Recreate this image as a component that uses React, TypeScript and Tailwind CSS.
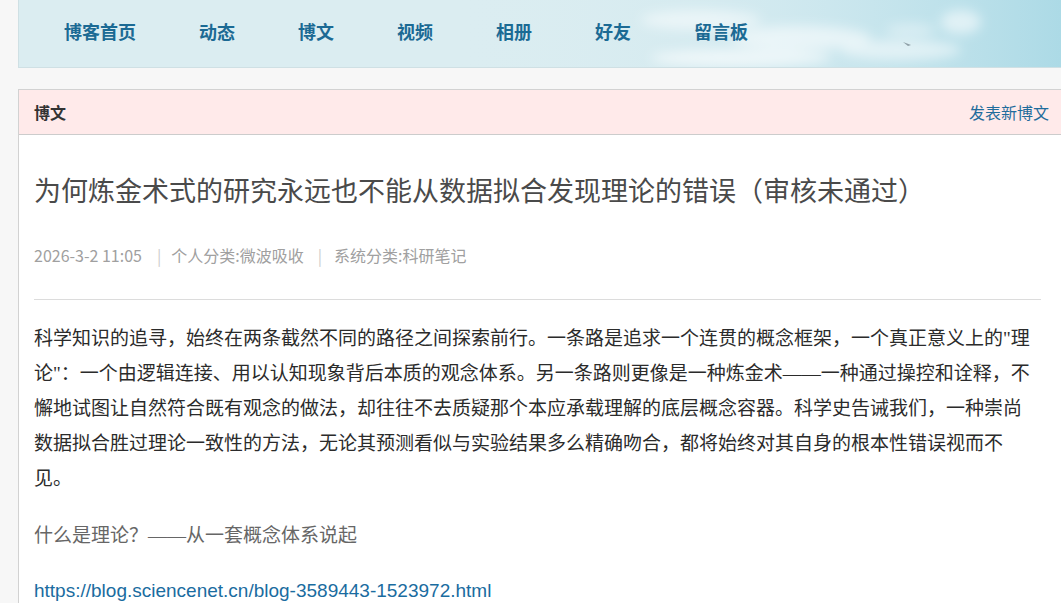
const navItems = ["博客首页", "动态", "博文", "视频", "相册", "好友", "留言板"];

const serif = "font-['Liberation_Serif','Noto_Sans_CJK_SC',serif]";

const Clouds = () => (
  <svg
    className="absolute right-0 top-0 h-full w-[620px]"
    viewBox="0 0 620 67"
    preserveAspectRatio="none"
  >
    <defs>
      <linearGradient id="sky" x1="0" x2="1" y1="0" y2="0">
        <stop offset="0" stopColor="#dcedf1" stopOpacity="0" />
        <stop offset="0.55" stopColor="#c9e6ee" stopOpacity="0.6" />
        <stop offset="1" stopColor="#acdae6" />
      </linearGradient>
      <filter id="blur" x="-50%" y="-50%" width="200%" height="200%">
        <feGaussianBlur stdDeviation="6" />
      </filter>
    </defs>
    <rect width="620" height="67" fill="url(#sky)" />
    <g filter="url(#blur)" fill="#ffffff">
      <ellipse cx="260" cy="20" rx="60" ry="10" opacity="0.5" />
      <ellipse cx="360" cy="38" rx="70" ry="12" opacity="0.55" />
      <ellipse cx="300" cy="58" rx="90" ry="9" opacity="0.6" />
      <ellipse cx="460" cy="50" rx="60" ry="10" opacity="0.5" />
      <ellipse cx="520" cy="22" rx="20" ry="12" opacity="0.55" />
      <ellipse cx="470" cy="30" rx="25" ry="6" opacity="0.4" />
    </g>
    <path d="M462 42 l8 3 l-3 1 z" fill="#6c7c84" opacity="0.7" />
  </svg>
);

export default function App() {
  return (
    <div className="min-h-[603px] bg-[#f7f7f7] pl-[18px] font-['Noto_Sans_CJK_SC',sans-serif]">
      <header className="relative h-[68px] overflow-hidden border-b border-l border-[#cfe0e4] bg-[#dbedf1]">
        <Clouds />
        <nav className="relative flex h-[67px] items-center gap-[63px] pl-[45px]">
          {navItems.map((item) => (
            <a
              key={item}
              href="#"
              className={`${serif} text-[18px] font-bold text-[#1b6a94]`}
            >
              {item}
            </a>
          ))}
        </nav>
      </header>

      <section className="mt-[21px] border-l border-t border-[#d2d2d2] bg-white">
        <div className="flex h-[45px] items-center justify-between border-b border-[#cccccc] bg-[#ffeaea] pl-[15px] pr-[12px]">
          <span className="text-[16px] font-bold text-[#333333]">博文</span>
          <a href="#" className="text-[16px] text-[#1f6c9c]">
            发表新博文
          </a>
        </div>

        <div className="pl-[15px] pr-[21px] pt-[35px]">
          <h1 className="text-[27px] leading-[40px] font-normal text-[#4a4a4a]">
            为何炼金术式的研究永远也不能从数据拟合发现理论的错误（审核未通过）
          </h1>

          <div className="mt-[33px] flex items-center text-[16px] leading-[24px] text-[#a0a0a0]">
            <span>2026-3-2 11:05</span>
            <span className="ml-[15px] mr-[10px] text-[#cccccc]">|</span>
            <span>个人分类:微波吸收</span>
            <span className="ml-[14px] mr-[12px] text-[#cccccc]">|</span>
            <span>系统分类:科研笔记</span>
          </div>

          <div className="mt-[32px] h-px w-[1007px] bg-[#dcdcdc]" />

          <div className={`${serif} mt-[21px] w-[1004px] text-[19px] leading-[35px]`}>
            <p className="text-[#2b2b2b]">
              科学知识的追寻，始终在两条截然不同的路径之间探索前行。一条路是追求一个连贯的概念框架，一个真正意义上的"理论"：一个由逻辑连接、用以认知现象背后本质的观念体系。另一条路则更像是一种炼金术——一种通过操控和诠释，不懈地试图让自然符合既有观念的做法，却往往不去质疑那个本应承载理解的底层概念容器。科学史告诫我们，一种崇尚数据拟合胜过理论一致性的方法，无论其预测看似与实验结果多么精确吻合，都将始终对其自身的根本性错误视而不见。
            </p>
            <p className="mt-[22px] text-[#666666]">
              什么是理论？——从一套概念体系说起
            </p>
            <p className="mt-[20px] font-['Liberation_Sans',sans-serif] text-[19px]">
              <a href="#" className="text-[#1a6ca0]">
                https://blog.sciencenet.cn/blog-3589443-1523972.html
              </a>
            </p>
          </div>
        </div>
      </section>
    </div>
  );
}
